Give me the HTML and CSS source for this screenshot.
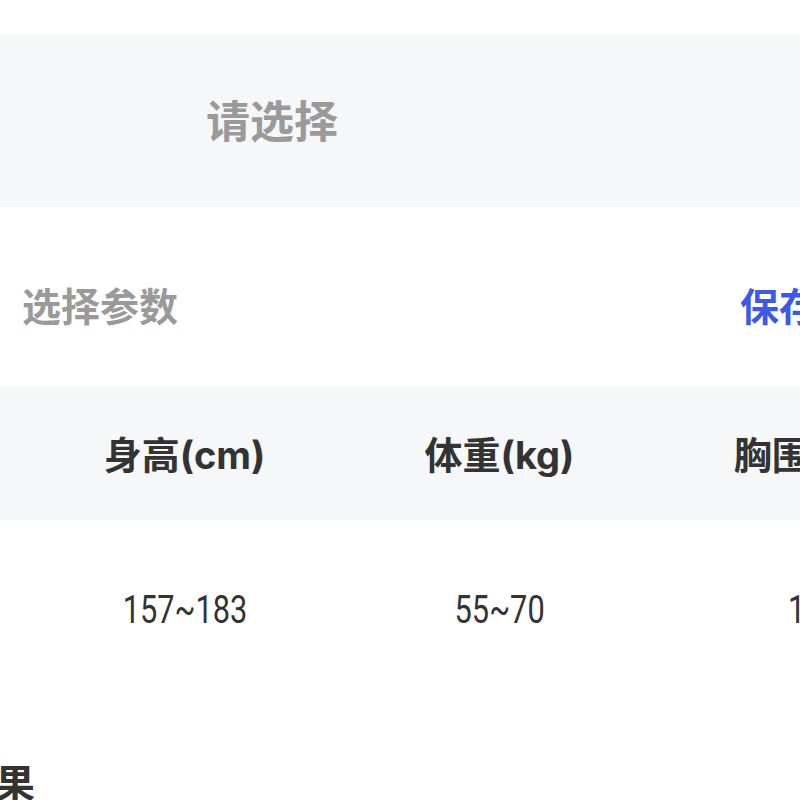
FILE: index.html
```html
<!DOCTYPE html>
<html lang="zh-CN">
<head>
<meta charset="utf-8">
<title>选择参数</title>
<link rel="stylesheet" href="styles.css">
</head>
<body>
<div class="page">
  <div class="top-gap"></div>
  <div class="picker">
    <span class="picker-text">请选择</span>
  </div>
  <div class="params-head">
    <span class="params-title">选择参数</span>
    <span class="params-save">保存</span>
  </div>
  <div class="table">
    <div class="table-row table-head">
      <div class="cell">身高(cm)</div>
      <div class="cell">体重(kg)</div>
      <div class="cell">胸围(cm)</div>
      <div class="cell">腰围(cm)</div>
    </div>
    <div class="table-row table-body">
      <div class="cell"><span class="num">157~183</span></div>
      <div class="cell"><span class="num">55~70</span></div>
      <div class="cell"><span class="num">100</span></div>
      <div class="cell"><span class="num">80</span></div>
    </div>
  </div>
  <div class="result-title">果</div>
</div>
</body>
</html>
```

FILE: styles.css
```css
html, body {
  margin: 0;
  padding: 0;
  background: #ffffff;
}

body {
  width: 800px;
  height: 800px;
  overflow: hidden;
  font-family: "Noto Sans CJK SC", "Noto Sans", sans-serif;
}

.page {
  width: 840px;
}

.top-gap {
  height: 35px;
}

.picker {
  height: 172px;
  background: #f6f7f9;
  display: flex;
  align-items: center;
  padding-left: 206px;
  padding-bottom: 4px;
  box-sizing: border-box;
}

.picker-text {
  font-size: 44px;
  line-height: 44px;
  font-weight: 700;
  color: #9a9a9a;
}

.params-head {
  height: 180px;
  box-sizing: border-box;
  padding: 78px 22px 0 22px;
  display: flex;
  justify-content: space-between;
  align-items: flex-start;
}

.params-title {
  font-size: 39px;
  line-height: 39px;
  font-weight: 700;
  color: #9a9a9a;
}

.params-save {
  font-size: 39px;
  line-height: 39px;
  font-weight: 700;
  color: #3d5ae4;
}

.table {
  overflow: hidden;
}

.table-row {
  display: grid;
  grid-template-columns: repeat(4, 315px);
  padding-left: 27px;
  align-items: center;
}

.table-head {
  height: 133px;
  background: #f6f7f9;
  padding-top: 3px;
  box-sizing: border-box;
}

.table-head .cell {
  font-family: Inter, "Noto Sans CJK SC", sans-serif;
  font-size: 38px;
  line-height: 38px;
  font-weight: 700;
  color: #333333;
}

.table-body {
  height: 180px;
}

.cell {
  text-align: center;
  white-space: nowrap;
}

.num {
  display: inline-block;
  font-family: Roboto, "Liberation Sans", sans-serif;
  font-size: 38px;
  line-height: 38px;
  color: #333333;
  transform: scaleX(0.81);
}

.result-title {
  margin-top: 61px;
  margin-left: -5px;
  font-size: 40px;
  line-height: 40px;
  font-weight: 700;
  color: #333333;
}
```
